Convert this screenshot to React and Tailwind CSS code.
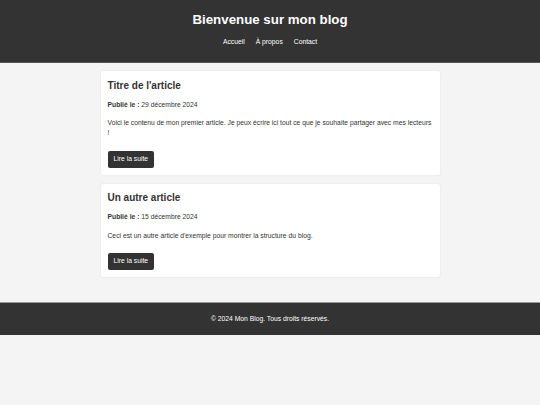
export default function App() {
  const articles = [
    {
      title: "Titre de l'article",
      date: "29 décembre 2024",
      text: "Voici le contenu de mon premier article. Je peux écrire ici tout ce que je souhaite partager avec mes lecteurs !",
    },
    {
      title: "Un autre article",
      date: "15 décembre 2024",
      text: "Ceci est un autre article d'exemple pour montrer la structure du blog.",
    },
  ];
  return (
    <div
      className="min-h-screen bg-[#f4f4f4] text-[#333]"
      style={{ fontFamily: '"Liberation Sans", Arial, sans-serif' }}
    >
      <header className="bg-[#333] text-white text-center pt-[11.5px] pb-[15px] border-b border-[#555]">
        <h1 className="text-[13.3px] leading-[16px] font-bold">Bienvenue sur mon blog</h1>
        <nav className="mt-[9.5px] flex justify-center gap-[11px] text-[6.75px] leading-[10px]">
          <a href="#">Accueil</a>
          <a href="#">À propos</a>
          <a href="#">Contact</a>
        </nav>
      </header>
      <main className="pt-[8px] pb-[25px] flex flex-col items-center gap-[9px]">
        {articles.map((a) => (
          <article
            key={a.title}
            className="w-[339px] bg-white rounded-[2px] shadow-[0_0_2px_rgba(0,0,0,0.1)] p-[7px]"
          >
            <h2 className="mt-[1.5px] text-[10px] leading-[12px] font-bold">{a.title}</h2>
            <p className="mt-[8px] text-[6.75px] leading-[10px]">
              <strong>Publié le :</strong> {a.date}
            </p>
            <p className="mt-[8.5px] text-[6.75px] leading-[10px]">{a.text}</p>
            <button className="mt-[12.5px] h-[17px] px-[6px] bg-[#333] text-white text-[6.75px] rounded-[2px] block">
              Lire la suite
            </button>
          </article>
        ))}
      </main>
      <footer className="bg-[#333] text-white border-t border-[#9a9a9a] h-[33px] flex items-center justify-center text-[6.75px] leading-[10px]">
        © 2024 Mon Blog. Tous droits réservés.
      </footer>
    </div>
  );
}
